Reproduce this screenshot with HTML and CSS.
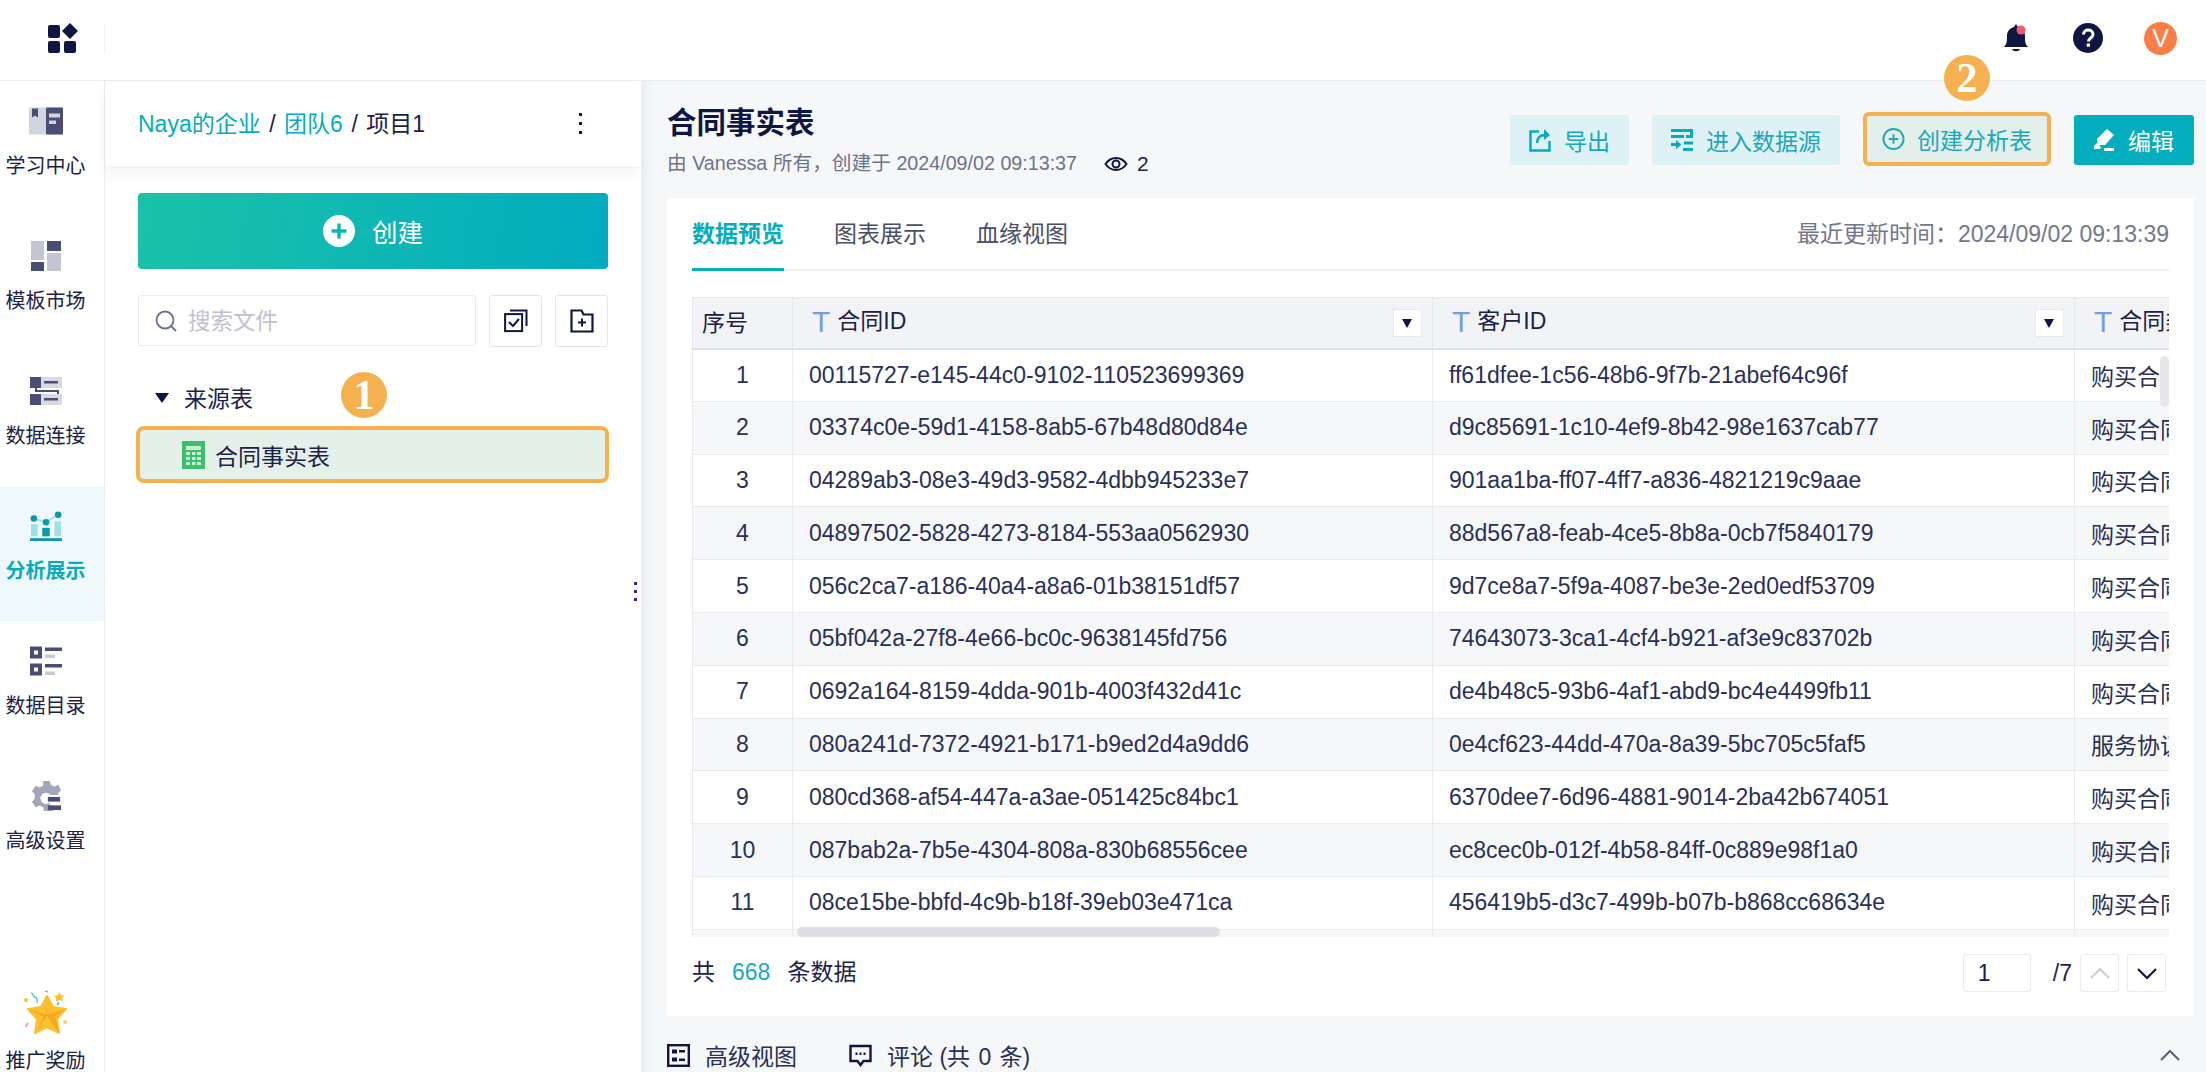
FILE: index.html
```
<!DOCTYPE html>
<html lang="en">
<head>
    <meta charset="UTF-8">
    <title>合同事实表</title>
    <link rel="stylesheet" href="styles.css">
</head>
<body>
    <header class="topbar">
        <div class="logo-cell">
            <svg width="30" height="30" viewBox="0 0 30 30"><rect x="0" y="2" width="12" height="13" rx="2" fill="#0f1642"/><path d="M22 0l8 8-8 8-8-8z" fill="#0f1642"/><rect x="0" y="18" width="12" height="12" rx="2" fill="#0f1642"/><rect x="16" y="18" width="12" height="12" rx="2" fill="#0f1642"/></svg>
        </div>
        <div class="top-icons">
            <svg class="bell" width="26" height="30" viewBox="0 0 26 30"><path d="M1 24c3-3 3-6 3-11 0-5 3-8 7-9l2-3 2 3c4 1 7 4 7 9 0 5 0 8 3 11z" fill="#0f1642"/><path d="M9 26h8c-1 3-7 3-8 0z" fill="#0f1642"/><circle cx="18" cy="7" r="4.5" fill="#ef5a6a"/></svg>
            <svg width="30" height="30" viewBox="0 0 30 30"><circle cx="15" cy="15" r="15" fill="#0f1642"/><path d="M10.5 11.5c0-6 9.5-6 9.500 0 0 3.500-4.500 3.500-4.500 7" fill="none" stroke="#fff" stroke-width="3"/><rect x="13.700" y="20.500" width="3.200" height="3.200" fill="#fff"/></svg>
            <div class="avatar">V</div>
        </div>
    </header>

    <div class="main">
        <nav class="sidebar">
            <a class="nav-item">
                <svg class="nav-icon" viewBox="0 0 34 27"><rect width="34" height="27" fill="#d2d4df"/><rect x="17" width="17" height="27" rx="1" fill="#4a4e74"/><path d="M3 1h6v9l-3-2-3 2z" fill="#4a4e74"/><rect x="20" y="6" width="11" height="4" fill="#d2d4df"/><rect x="20" y="13" width="7" height="3.500" fill="#d2d4df"/></svg>
                <span>学习中心</span>
            </a>
            <a class="nav-item">
                <svg class="nav-icon" viewBox="0 0 34 30"><rect x="2" width="13" height="19" fill="#c3c5d3"/><rect x="18" width="14" height="10" fill="#4a4e74"/><rect x="2" y="21" width="13" height="9" fill="#4a4e74"/><rect x="18" y="12" width="14" height="18" fill="#c3c5d3"/></svg>
                <span>模板市场</span>
            </a>
            <a class="nav-item">
                <svg class="nav-icon" viewBox="0 0 34 28"><rect x="1" width="32" height="11" fill="#d8d9e3"/><rect x="1" y="17" width="32" height="11" fill="#d8d9e3"/><rect x="1" width="11" height="11" fill="#4a4e74"/><rect x="1" y="17" width="11" height="11" fill="#4a4e74"/><rect x="15" y="4" width="14" height="2.500" fill="#4a4e74"/><rect x="15" y="21" width="14" height="2.500" fill="#4a4e74"/><path d="M7 11v3h22v3" fill="none" stroke="#4a4e74" stroke-width="2"/></svg>
                <span>数据连接</span>
            </a>
            <a class="nav-item active">
                <svg class="nav-icon" viewBox="0 0 34 32"><rect x="1" y="14" width="7" height="13" fill="#9ee1e8"/><rect x="26" y="11" width="7" height="16" fill="#9ee1e8"/><rect x="13" y="18" width="8" height="9" fill="#0a9aa8"/><path d="M4 8l13 4 13-8" fill="none" stroke="#9ee1e8" stroke-width="2"/><circle cx="4" cy="8" r="3.500" fill="#0a9aa8"/><circle cx="17" cy="12" r="3.500" fill="#0a9aa8"/><circle cx="30" cy="4" r="3.500" fill="#0a9aa8"/><rect y="29" width="34" height="3" fill="#0a9aa8"/></svg>
                <span>分析展示</span>
            </a>
            <a class="nav-item">
                <svg class="nav-icon" viewBox="0 0 34 29"><path fill-rule="evenodd" d="M1 0h12v12H1zM5 4v4h4V4z" fill="#4a4e74"/><path fill-rule="evenodd" d="M1 17h12v12H1zM5 21v4h4v-4z" fill="#4a4e74"/><rect x="16" y="1" width="17" height="3.500" fill="#4a4e74"/><rect x="16" y="8" width="10" height="3.500" fill="#c8cad6"/><rect x="16" y="17.500" width="17" height="3.500" fill="#4a4e74"/><rect x="16" y="25" width="10" height="3.500" fill="#c8cad6"/></svg>
                <span>数据目录</span>
            </a>
            <a class="nav-item">
                <svg class="nav-icon" viewBox="0 0 34 32"><path d="M14 0h7l1 4 4 2 4-2 3 6-3 3v2h-9v-1a6 6 0 1 0 0 9v3h4v5l-1 1h-9l-1-4-4-2-4 2-4-6 3-3v-5l-3-3 4-6 4 2 4-2z" fill="#a3a6b8"/><rect x="19" y="17" width="13" height="5" fill="#4a4e74"/><rect x="19" y="26" width="14" height="5" fill="#4a4e74"/></svg>
                <span>高级设置</span>
            </a>
            <a class="nav-item promo">
                <svg class="star-icon" viewBox="0 0 46 46"><path d="M23 6l6 11 13 2-9 10 2 14-12-6-12 6 2-14-9-10 13-2z" fill="#fbc02d" stroke="#fbc02d" stroke-width="2" stroke-linejoin="round"/><path d="M23 6l-1 19 20-6-11 7 4 17-12-17-12 17 9-16-16-8 19 6z" fill="#f5a623"/><path d="M7 3c3 0 1 4 4 4s1 5 3 5" fill="none" stroke="#3fdcb0" stroke-width="1.500"/><path d="M35 2l2 3 3 0-2 3 1 3-4-1-3 2 0-4-2-2 4-1z" fill="#fbc02d"/><circle cx="2" cy="10" r="2" fill="#fbc02d"/><circle cx="41" cy="32" r="2" fill="#fbd35a"/><path d="M2 37c0-2 1-3 2-4" fill="none" stroke="#f88a94" stroke-width="1.500"/><path d="M21 1l3 1" stroke="#f88a94" stroke-width="1.500"/><path d="M33 15l2-3" stroke="#35c7e0" stroke-width="1.500"/></svg>
                <span>推广奖励</span>
            </a>
        </nav>

        <aside class="file-panel">
            <div class="crumbs">
                <div class="crumb-path">
                    <span class="link">Naya的企业</span><span class="sep">/</span><span class="link">团队6</span><span class="sep">/</span><span>项目1</span>
                </div>
                <div class="dots"><i></i><i></i><i></i></div>
            </div>
            <div class="panel-body">
                <button class="create-btn">
                    <svg width="32" height="32" viewBox="0 0 32 32"><circle cx="16" cy="16" r="16" fill="#fff"/><path d="M16 8.500v15M8.500 16h15" stroke="#0fb6b3" stroke-width="3.500"/></svg>
                    创建
                </button>
                <div class="search-row">
                    <div class="search-box">
                        <svg width="24" height="24" viewBox="0 0 24 24"><circle cx="11" cy="11" r="8.500" fill="none" stroke="#6d7190" stroke-width="1.800"/><path d="M17 17l5 5" stroke="#6d7190" stroke-width="1.800"/></svg>
                        <span class="placeholder">搜索文件</span>
                    </div>
                    <div class="square-btn">
                        <svg width="24" height="24" viewBox="0 0 24 24"><rect x="1.100" y="5.100" width="17" height="17" fill="none" stroke="#0f1642" stroke-width="2"/><path d="M6 1.500h16.500V17" fill="none" stroke="#0f1642" stroke-width="2"/><path d="M5 13l4 4 6-7" fill="none" stroke="#0f1642" stroke-width="2"/></svg>
                    </div>
                    <div class="square-btn">
                        <svg width="24" height="24" viewBox="0 0 24 24"><path d="M1.500 1.500h10l2 4h9v17h-21z" fill="none" stroke="#0f1642" stroke-width="2.200"/><path d="M12 9.500v8M8 13.500h8" stroke="#0f1642" stroke-width="2"/></svg>
                    </div>
                </div>
                <div class="tree-head">
                    <span class="caret"></span>
                    来源表
                    <span class="step-badge step-one">1</span>
                </div>
                <div class="tree-row">
                    <svg width="23" height="28" viewBox="0 0 23 28"><rect width="23" height="28" fill="#3cbf6a"/><rect x="4" y="5" width="15" height="4" fill="#c9efd6"/><g fill="#c9efd6"><rect x="4" y="11" width="4" height="3"/><rect x="10" y="11" width="3.500" height="3"/><rect x="15" y="11" width="4" height="3"/><rect x="4" y="16" width="4" height="3"/><rect x="10" y="16" width="3.500" height="3"/><rect x="15" y="16" width="4" height="3"/><rect x="4" y="21" width="4" height="3"/><rect x="10" y="21" width="3.500" height="3"/><rect x="15" y="21" width="4" height="3"/></g></svg>
                    合同事实表
                </div>
            </div>
        </aside>

        <section class="content">
            <span class="handle"><i></i><i></i><i></i></span>
            <div class="content-head">
                <div>
                    <h1>合同事实表</h1>
                    <div class="meta">
                        <span>由 Vanessa 所有，创建于 2024/09/02 09:13:37</span>
                        <span class="views">
                            <svg width="24" height="16" viewBox="0 0 24 16"><path d="M1.500 8C7 0 17 0 22.500 8 17 16 7 16 1.500 8z" fill="none" stroke="#0f1642" stroke-width="2"/><circle cx="12" cy="8" r="3.500" fill="none" stroke="#0f1642" stroke-width="2"/></svg>
                            2
                        </span>
                    </div>
                </div>
                <div class="actions">
                    <button class="act-btn">
                        <svg width="22" height="24" viewBox="0 0 22 24"><path d="M10 3.500H1.500v19h19V13" fill="none" stroke="#03adbd" stroke-width="2.500"/><path d="M8 15c0-5 3-8 8-8" fill="none" stroke="#03adbd" stroke-width="2.500"/><path d="M15 1l6 6-6 5z" fill="#03adbd"/></svg>
                        导出
                    </button>
                    <button class="act-btn">
                        <svg width="22" height="24" viewBox="0 0 22 24"><g fill="#03adbd"><rect x="0" y="1" width="22" height="3"/><rect x="0" y="7" width="13" height="3"/><rect x="19" y="1" width="3" height="9"/><rect x="15" y="7" width="7" height="3"/><rect x="13" y="13.500" width="9" height="3"/><rect x="12" y="20" width="10" height="3"/><path d="M0 15h5v-3l5.500 4.500L5 21v-3H0z"/></g></svg>
                        进入数据源
                    </button>
                    <div class="act-wrap">
                        <span class="step-badge step-two">2</span>
                        <button class="act-btn marked">
                            <svg width="24" height="24" viewBox="0 0 24 24"><circle cx="12" cy="12" r="10.500" fill="none" stroke="#1fa9b5" stroke-width="2"/><path d="M12 7v10M7 12h10" stroke="#1fa9b5" stroke-width="2"/></svg>
                            创建分析表
                        </button>
                    </div>
                    <button class="act-btn solid">
                        <svg width="22" height="22" viewBox="0 0 22 22"><path d="M14 0l7 6-9 10H5l-1-6z" fill="#fff"/><path d="M1 17l3-3 4 4-1 2H1z" fill="#fff"/><rect x="11" y="19" width="10" height="3" fill="#fff"/></svg>
                        编辑
                    </button>
                </div>
            </div>

            <div class="card">
                <div class="tabs">
                    <span class="tab on">数据预览</span>
                    <span class="tab">图表展示</span>
                    <span class="tab">血缘视图</span>
                    <span class="updated">最近更新时间：2024/09/02 09:13:39</span>
                </div>
                <div class="table-wrap">
                    <table class="grid">
                        <colgroup><col class="c-no"><col class="c-id"><col class="c-id2"><col class="c-type"></colgroup>
                        <thead>
                            <tr>
                                <th class="no">序号</th>
                                <th><div class="th-in"><span class="t-mark">T</span>合同ID<span class="drop"></span></div></th>
                                <th><div class="th-in"><span class="t-mark">T</span>客户ID<span class="drop"></span></div></th>
                                <th><div class="th-in"><span class="t-mark">T</span>合同类型</div></th>
                            </tr>
                        </thead>
                        <tbody>
                            <tr><td class="no">1</td><td>00115727-e145-44c0-9102-110523699369</td><td>ff61dfee-1c56-48b6-9f7b-21abef64c96f</td><td>购买合同</td></tr>
                            <tr><td class="no">2</td><td>03374c0e-59d1-4158-8ab5-67b48d80d84e</td><td>d9c85691-1c10-4ef9-8b42-98e1637cab77</td><td>购买合同</td></tr>
                            <tr><td class="no">3</td><td>04289ab3-08e3-49d3-9582-4dbb945233e7</td><td>901aa1ba-ff07-4ff7-a836-4821219c9aae</td><td>购买合同</td></tr>
                            <tr><td class="no">4</td><td>04897502-5828-4273-8184-553aa0562930</td><td>88d567a8-feab-4ce5-8b8a-0cb7f5840179</td><td>购买合同</td></tr>
                            <tr><td class="no">5</td><td>056c2ca7-a186-40a4-a8a6-01b38151df57</td><td>9d7ce8a7-5f9a-4087-be3e-2ed0edf53709</td><td>购买合同</td></tr>
                            <tr><td class="no">6</td><td>05bf042a-27f8-4e66-bc0c-9638145fd756</td><td>74643073-3ca1-4cf4-b921-af3e9c83702b</td><td>购买合同</td></tr>
                            <tr><td class="no">7</td><td>0692a164-8159-4dda-901b-4003f432d41c</td><td>de4b48c5-93b6-4af1-abd9-bc4e4499fb11</td><td>购买合同</td></tr>
                            <tr><td class="no">8</td><td>080a241d-7372-4921-b171-b9ed2d4a9dd6</td><td>0e4cf623-44dd-470a-8a39-5bc705c5faf5</td><td>服务协议</td></tr>
                            <tr><td class="no">9</td><td>080cd368-af54-447a-a3ae-051425c84bc1</td><td>6370dee7-6d96-4881-9014-2ba42b674051</td><td>购买合同</td></tr>
                            <tr><td class="no">10</td><td>087bab2a-7b5e-4304-808a-830b68556cee</td><td>ec8cec0b-012f-4b58-84ff-0c889e98f1a0</td><td>购买合同</td></tr>
                            <tr><td class="no">11</td><td>08ce15be-bbfd-4c9b-b18f-39eb03e471ca</td><td>456419b5-d3c7-499b-b07b-b868cc68634e</td><td>购买合同</td></tr>
                            <tr><td class="no"></td><td></td><td></td><td></td></tr>
                        </tbody>
                    </table>
                    <span class="scroll-y"></span>
                    <span class="scroll-x"></span>
                </div>
                <div class="pager">
                    <div class="total">共<span class="num">668</span>条数据</div>
                    <div class="pager-right">
                        <div class="page-input">1</div>
                        <span class="page-total">/7</span>
                        <div class="page-btn">
                            <svg width="22" height="13" viewBox="0 0 22 13"><path d="M2 11l9-9 9 9" fill="none" stroke="#ced0da" stroke-width="2.200"/></svg>
                        </div>
                        <div class="page-btn">
                            <svg width="22" height="13" viewBox="0 0 22 13"><path d="M2 2l9 9 9-9" fill="none" stroke="#0f1642" stroke-width="2.200"/></svg>
                        </div>
                    </div>
                </div>
            </div>

            <div class="foot-bar">
                <span class="foot-item">
                    <svg width="23" height="23" viewBox="0 0 23 23"><rect x="1.200" y="1.200" width="20.600" height="20.600" fill="none" stroke="#0f1642" stroke-width="2.400"/><rect x="5" y="5.500" width="5" height="4" fill="#0f1642"/><rect x="5" y="13.500" width="5" height="4" fill="#0f1642"/><rect x="12" y="6" width="6" height="2.500" fill="#0f1642"/><rect x="12" y="14.500" width="6" height="2.500" fill="#0f1642"/></svg>
                    高级视图
                </span>
                <span class="foot-item">
                    <svg width="23" height="23" viewBox="0 0 23 23"><path d="M1.500 2h20v15h-7l-3 4-3-4h-7z" fill="none" stroke="#0f1642" stroke-width="2.400"/><g fill="#0f1642"><rect x="6.500" y="8.500" width="2" height="2.500"/><rect x="10.500" y="8.500" width="2" height="2.500"/><rect x="14.500" y="8.500" width="2" height="2.500"/></g></svg>
                    <span>评论 <span class="count">(共 0 条)</span></span>
                </span>
                <svg class="foot-up" width="20" height="12" viewBox="0 0 20 12"><path d="M1 11l9-9 9 9" fill="none" stroke="#5b6079" stroke-width="2"/></svg>
            </div>
        </section>
    </div>
</body>
</html>
```

FILE: styles.css
```
* {
    box-sizing: border-box;
}
html, body {
    margin: 0;
    height: 1072px;
    overflow: hidden;
}
body {
    font-family: "Liberation Sans", "Noto Sans CJK SC", sans-serif;
    font-size: 23px;
    color: #1c2148;
    background: #fff;
    display: flex;
    flex-direction: column;
}
button {
    font-family: inherit;
    font-size: inherit;
    border: none;
    cursor: pointer;
}

/* top bar */
.topbar {
    height: 81px;
    flex: none;
    display: flex;
    align-items: center;
    justify-content: space-between;
    border-bottom: 1px solid #e9ebef;
    padding-bottom: 4px;
}
.logo-cell {
    width: 105px;
    height: 30px;
    padding-left: 48px;
    border-right: 1px solid #eef0f3;
}
.top-icons {
    display: flex;
    align-items: center;
    gap: 41px;
    padding-right: 29px;
}
.bell {
    margin-right: 3px;
}
.avatar {
    width: 33px;
    height: 33px;
    border-radius: 50%;
    background: #fb7d47;
    color: #fff;
    font-size: 25px;
    text-align: center;
    line-height: 33px;
}

/* left nav */
.main {
    flex: 1;
    display: flex;
    min-height: 0;
}
.sidebar {
    width: 105px;
    flex: none;
    border-right: 1px solid #eceef2;
    display: flex;
    flex-direction: column;
}
.nav-item {
    height: 135px;
    flex: none;
    padding-top: 25px;
    display: flex;
    flex-direction: column;
    align-items: center;
    font-size: 20px;
    color: #1c2148;
    line-height: 28px;
}
.nav-icon {
    width: 34px;
    height: 30px;
    margin-bottom: 16px;
    margin-right: 13px;
    flex: none;
}
.nav-item span {
    margin-right: 13px;
}
.nav-item.active {
    background: #eff8fa;
    color: #03adbd;
    font-weight: 700;
}
.promo {
    margin-top: auto;
    margin-bottom: -3px;
    height: auto;
    padding-top: 0;
}
.star-icon {
    width: 46px;
    height: 46px;
    margin-right: 11px;
    margin-bottom: 11px;
}

/* file panel */
.file-panel {
    width: 536px;
    flex: none;
    display: flex;
    flex-direction: column;
}
.crumbs {
    height: 85px;
    flex: none;
    padding: 0 59px 4px 33px;
    display: flex;
    align-items: center;
    justify-content: space-between;
    box-shadow: 0 6px 12px rgba(30, 40, 80, 0.06);
}
.crumb-path .link {
    color: #03adbd;
}
.crumb-path .sep {
    margin: 0 8.5px;
}
.dots {
    display: flex;
    flex-direction: column;
    gap: 6px;
    margin-top: 4px;
}
.dots i {
    width: 3px;
    height: 3px;
    background: #0f1642;
    display: block;
}
.panel-body {
    padding: 27px 32px 0 33px;
}
.create-btn {
    width: 470px;
    height: 76px;
    border-radius: 4px;
    background: linear-gradient(100deg, #1bc2a8, #02acbf);
    color: #fff;
    font-size: 25.5px;
    display: flex;
    align-items: center;
    justify-content: center;
    gap: 17px;
    padding-bottom: 2px;
}
.search-row {
    display: flex;
    align-items: flex-start;
    gap: 13px;
    margin-top: 26px;
}
.search-box {
    width: 338px;
    height: 51px;
    border: 1px solid #e8eaee;
    border-radius: 3px;
    padding-left: 15px;
    display: flex;
    align-items: center;
    gap: 10px;
    color: #c0c2cd;
    font-size: 22.5px;
}
.placeholder {
    margin-top: -3px;
}
.square-btn {
    width: 53px;
    height: 52px;
    border: 1px solid #e3e5ea;
    border-radius: 3px;
    display: flex;
    align-items: center;
    justify-content: center;
}
.tree-head {
    position: relative;
    height: 79px;
    display: flex;
    align-items: center;
    padding-left: 17px;
    padding-top: 20px;
    gap: 15px;
}
.caret {
    width: 0;
    height: 0;
    border-left: 7px solid transparent;
    border-right: 7px solid transparent;
    border-top: 10px solid #0f1642;
    margin-top: 2px;
}
.tree-row {
    width: 473px;
    height: 57px;
    margin-left: -2px;
    border: 4px solid #f5b04f;
    border-radius: 8px;
    background: #e4f1ea;
    display: flex;
    align-items: center;
    padding-left: 42px;
    gap: 10px;
}
.step-badge {
    position: absolute;
    width: 46px;
    height: 46px;
    border-radius: 50%;
    background: #f5b04f;
    color: #fff;
    font-family: "Liberation Serif", serif;
    font-weight: 700;
    font-size: 42px;
    line-height: 46px;
    text-align: center;
}
.step-one {
    left: 203px;
    top: 25px;
}
.step-two {
    left: 81px;
    top: -57px;
}

/* content */
.content {
    flex: 1;
    min-width: 0;
    position: relative;
    background: #f6f7f9;
    padding: 0 12px 0 26px;
    box-shadow: inset 14px 0 12px -10px rgba(30, 40, 80, 0.07);
}
.handle {
    position: absolute;
    left: -7px;
    top: 501px;
    display: flex;
    flex-direction: column;
    gap: 5px;
}
.handle i {
    width: 3px;
    height: 3px;
    background: #2b2f77;
    display: block;
}
.content-head {
    height: 117px;
    display: flex;
    justify-content: space-between;
    padding-top: 24px;
}
h1 {
    margin: 0;
    font-size: 29.5px;
    line-height: 36px;
    color: #0f1642;
}
.meta {
    margin-top: 5px;
    display: flex;
    align-items: center;
    gap: 27px;
    font-size: 19.7px;
    color: #6f7389;
    white-space: nowrap;
}
.views {
    display: inline-flex;
    align-items: center;
    gap: 9px;
    margin-top: 6px;
    color: #1c2148;
    font-size: 21px;
}
.actions {
    display: flex;
    align-items: flex-start;
    gap: 23px;
    padding-top: 10px;
}
.act-wrap {
    position: relative;
    margin: -3px 0 0;
}
.act-btn {
    height: 50px;
    padding: 0 19px;
    border-radius: 3px;
    background: #def1f5;
    color: #1aa8b8;
    font-size: 23px;
    display: flex;
    align-items: center;
    gap: 13px;
    white-space: nowrap;
}
.act-btn.marked {
    height: 54px;
    padding: 0 15px;
    background: #e2efea;
    border: 4px solid #f5b04f;
    border-radius: 6px;
    gap: 12px;
    width: 188px;
}
.act-btn.solid {
    background: #03adbd;
    color: #fff;
    width: 120px;
}
.card {
    height: 818px;
    background: #fff;
    padding: 0 25px;
}
.tabs {
    height: 73px;
    border-bottom: 2px solid #eceef1;
    display: flex;
    align-items: flex-start;
    gap: 50px;
    padding-top: 19px;
    line-height: 34px;
    color: #4b4f66;
}
.tab {
    height: 53px;
    flex: none;
}
.tab.on {
    color: #03adbd;
    font-weight: 700;
    border-bottom: 3px solid #03adbd;
    height: 54px;
}
.updated {
    margin-left: auto;
    color: #73778c;
    white-space: nowrap;
}

/* table */
.table-wrap {
    position: relative;
    margin-top: 26px;
    height: 640px;
    overflow: hidden;
}
.grid {
    table-layout: fixed;
    border-collapse: collapse;
    width: 1582px;
}
.c-no { width: 100px; }
.c-id { width: 640px; }
.c-id2 { width: 642px; }
.c-type { width: 200px; }
.grid th {
    height: 51px;
    background: #f2f3f7;
    font-weight: 400;
    text-align: left;
    border: 1px solid #e6e8ed;
    border-bottom: 2px solid #dfe1e8;
    padding: 0 10px 0 19px;
    white-space: nowrap;
}
.grid th.no {
    padding: 0 0 4px 9px;
}
.th-in {
    display: flex;
    align-items: center;
    line-height: 30px;
    height: 49px;
    padding-bottom: 4px;
}
.t-mark {
    color: #7a9bdf;
    font-size: 30px;
    margin-right: 7px;
    line-height: 1;
    margin-top: 3px;
}
.drop {
    margin-left: auto;
    width: 29px;
    height: 28px;
    background: #fff;
    border: 1px solid #e8eaee;
    position: relative;
    margin-top: 4px;
}
.drop::after {
    content: "";
    position: absolute;
    left: 8px;
    top: 9px;
    border-left: 5.500px solid transparent;
    border-right: 5.500px solid transparent;
    border-top: 9px solid #0f1642;
}
.grid td {
    height: 52.8px;
    padding: 0 0 0 16px;
    border: 1px solid #e8eaee;
    white-space: nowrap;
    overflow: hidden;
    color: #2a2f58;
}
.grid td.no {
    padding: 0;
    text-align: center;
}
.grid tbody tr:nth-child(even) td {
    background: #f6f7f9;
}
.scroll-y {
    position: absolute;
    right: 0;
    top: 59px;
    width: 9px;
    height: 51px;
    border-radius: 5px;
    background: #e6e7eb;
}
.scroll-x {
    position: absolute;
    left: 105px;
    bottom: 0;
    width: 423px;
    height: 10px;
    border-radius: 5px;
    background: #dedfe4;
}
.pager {
    height: 79px;
    display: flex;
    align-items: flex-start;
    justify-content: space-between;
    padding-top: 17px;
    padding-right: 3px;
}
.total {
    display: flex;
    line-height: 36px;
}
.num {
    color: #1ba9bd;
    margin: 0 17px;
}
.pager-right {
    display: flex;
    align-items: center;
}
.page-input {
    width: 68px;
    height: 38px;
    border: 1px solid #e8eaee;
    border-radius: 3px;
    padding-left: 14px;
    line-height: 36px;
}
.page-total {
    margin: 0 8px 0 22px;
}
.page-btn {
    width: 39px;
    height: 38px;
    border: 1px solid #e8eaee;
    border-radius: 3px;
    display: flex;
    align-items: center;
    justify-content: center;
    margin-right: 8px;
}
.page-btn:last-child {
    margin-right: 0;
}
.foot-bar {
    display: flex;
    align-items: center;
    gap: 52px;
    height: 78px;
    margin-right: 14px;
    color: #2a2f58;
}
.foot-item {
    display: inline-flex;
    align-items: center;
    gap: 15px;
    white-space: nowrap;
}
.count {
    word-spacing: 2px;
}
.foot-up {
    margin-left: auto;
}
```
